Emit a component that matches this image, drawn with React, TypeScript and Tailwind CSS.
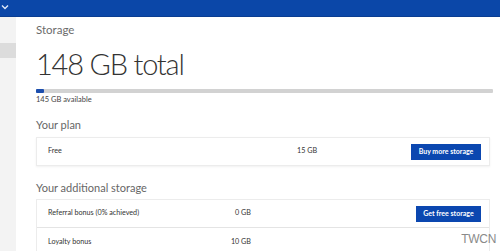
import React from "react";

export default function App() {
  const font = { fontFamily: 'Lato, "Open Sans", sans-serif' };
  return (
    <div className="w-[500px] h-[251px] overflow-hidden bg-white relative" style={font}>
      <div className="h-[17px] bg-[#0b47a8] border-b border-[#0a3d91] flex items-center pl-[1px]">
        <svg width="8" height="6" viewBox="0 0 8 6" className="mt-[-2px]">
          <path d="M1 1.5 L4 4.5 L7 1.5" stroke="#dfe8f8" strokeWidth="1.4" fill="none" />
        </svg>
      </div>
      <div className="flex h-[234px]">
        <div className="w-[16px] bg-[#f3f3f3] flex flex-col">
          <div className="h-[26px]" />
          <div className="h-[15px] bg-[#dcdcdc]" />
        </div>
        <div className="flex-1 pl-[20px] pr-[7px]">
          <div className="text-[11.5px] text-[#6b6b6b] leading-[18px] mt-[4px]">Storage</div>
          <div className="text-[29px] text-[#333] font-light leading-[32px] mt-[9px] whitespace-nowrap tracking-[-1.2px]">148 GB total</div>
          <div className="h-[4px] bg-[#d2d2d2] mt-[9px] rounded-[1px] flex">
            <div className="w-[8px] bg-[#1d4fae] rounded-[1px]" />
          </div>
          <div className="text-[7.5px] text-[#444] leading-[10px] mt-[2px]">145 GB available</div>
          <div className="text-[11px] text-[#666] leading-[16px] mt-[12px]">Your plan</div>
          <div className="mt-[4px] mr-[3px] h-[29px] border border-[#ececec] shadow-[0_1px_2px_rgba(0,0,0,0.06)] flex items-center pl-[11px] pr-[8px]">
            <div className="text-[7.2px] text-[#333] w-[249px]">Free</div>
            <div className="text-[7.2px] text-[#333] flex-1">15 GB</div>
            <div className="bg-[#0b47b0] text-white text-[7px] font-bold h-[16px] w-[70px] flex items-center justify-center whitespace-nowrap">Buy more storage</div>
          </div>
          <div className="text-[11px] text-[#666] leading-[16px] mt-[14px]">Your additional storage</div>
          <div className="mt-[3px] mr-[3px] border border-[#ececec]">
            <div className="h-[28px] flex items-center pl-[11px] pr-[8px] border-b border-[#e4e4e4]">
              <div className="text-[7.2px] text-[#333] w-[152px] whitespace-nowrap">Referral bonus (0% achieved)</div>
              <div className="text-[7.2px] text-[#333] w-[51px] text-right whitespace-nowrap">0 GB</div>
              <div className="flex-1" />
              <div className="bg-[#0b47b0] text-white text-[7px] font-bold h-[16px] w-[65px] flex items-center justify-center whitespace-nowrap">Get free storage</div>
            </div>
            <div className="h-[28px] flex items-center pl-[11px] pr-[8px]">
              <div className="text-[7.2px] text-[#333] w-[152px] whitespace-nowrap">Loyalty bonus</div>
              <div className="text-[7.2px] text-[#333] w-[51px] text-right whitespace-nowrap">10 GB</div>
            </div>
          </div>
        </div>
      </div>
      <div className="absolute right-[4px] bottom-[6px] text-[12px] text-[#8a8a8a] leading-[12px] tracking-[-0.3px]" style={{ fontFamily: '"Liberation Sans", sans-serif' }}>TWCN</div>
    </div>
  );
}
